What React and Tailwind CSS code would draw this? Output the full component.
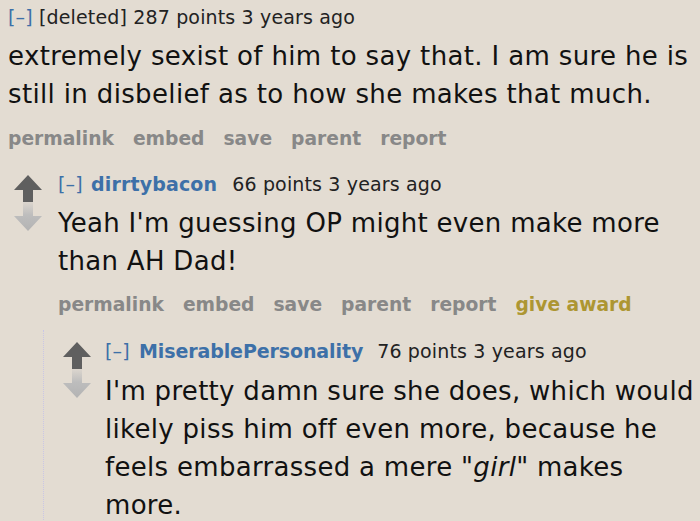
import React from "react";

const font = { fontFamily: '"DejaVu Sans", Verdana, sans-serif' };

function Arrows({ id }) {
  return (
    <div className="flex flex-col items-center w-[30px]">
      <svg width="30" height="27" viewBox="0 0 30 27">
        <polygon points="15,0 29,15 20,15 20,27 10,27 10,15 1,15" fill="#5f5f5f" />
      </svg>
      <svg width="30" height="29" viewBox="0 0 30 29">
        <defs>
          <linearGradient id={id} x1="0" y1="0" x2="0" y2="1">
            <stop offset="0" stopColor="#dcd6ce" />
            <stop offset="0.45" stopColor="#bdbdbd" />
            <stop offset="1" stopColor="#b3b3b3" />
          </linearGradient>
        </defs>
        <polygon points="10,0 20,0 20,14 29,14 15,29 1,14 10,14" fill={`url(#${id})`} />
      </svg>
    </div>
  );
}

function Buttons({ award }) {
  return (
    <div className="flex gap-[19px] text-[18.7px] leading-[24px] font-bold text-[#888888]">
      <span>permalink</span>
      <span>embed</span>
      <span>save</span>
      <span>parent</span>
      <span>report</span>
      {award && <span className="text-[#ad9632]">give award</span>}
    </div>
  );
}

export default function App() {
  return (
    <div
      className="w-[700px] h-[521px] overflow-hidden bg-[#e3dcd2] text-[#111111]"
      style={font}
    >
      <div className="pl-[8px] pt-[5px]">
        <div className="text-[19px] leading-[24px] tracking-[0.15px] text-[#222222]">
          <span className="text-[#3d70a8]">[–]</span> [deleted] 287 points 3 years ago
        </div>
        <div className="text-[26px] leading-[38px] tracking-[0.35px] mt-[8px] w-[690px]">
          extremely sexist of him to say that. I am sure he is still in disbelief as to how she makes that much.
        </div>
        <div className="mt-[14px]">
          <Buttons />
        </div>
      </div>

      <div className="flex mt-[21px] pl-[13px]">
        <div className="pt-[3px]">
          <Arrows id="g1" />
        </div>
        <div className="pl-[15px]">
          <div className="text-[19px] leading-[24px] tracking-[0.15px] text-[#222222]">
            <span className="text-[#3d70a8]">[–]</span>{" "}
            <span className="text-[#3d70a8] font-bold ml-[2px]">dirrtybacon</span>
            <span className="ml-[15px]">66 points 3 years ago</span>
          </div>
          <div className="text-[26px] leading-[38px] tracking-[0.3px] mt-[8px] w-[630px]">
            Yeah I'm guessing OP might even make more than AH Dad!
          </div>
          <div className="mt-[13px]">
            <Buttons award />
          </div>
        </div>
      </div>

      <div className="ml-[43px] mt-[13px] border-l border-dotted border-[#c9c6e6] pl-[18px] pt-[9px] h-[300px]">
        <div className="flex">
          <div className="pt-[3px]">
            <Arrows id="g2" />
          </div>
          <div className="pl-[13px]">
            <div className="text-[19px] leading-[24px] tracking-[0.15px] text-[#222222]">
              <span className="text-[#3d70a8]">[–]</span>{" "}
              <span className="text-[#3d70a8] font-bold ml-[3px] tracking-[-0.1px]">MiserablePersonality</span>
              <span className="ml-[14px]">76 points 3 years ago</span>
            </div>
            <div className="text-[26px] leading-[38px] tracking-[0.3px] mt-[9px] w-[592px]">
              I'm pretty damn sure she does, which would likely piss him off even more, because he feels embarrassed a mere <i>"girl"</i> makes more.
            </div>
          </div>
        </div>
      </div>
    </div>
  );
}
